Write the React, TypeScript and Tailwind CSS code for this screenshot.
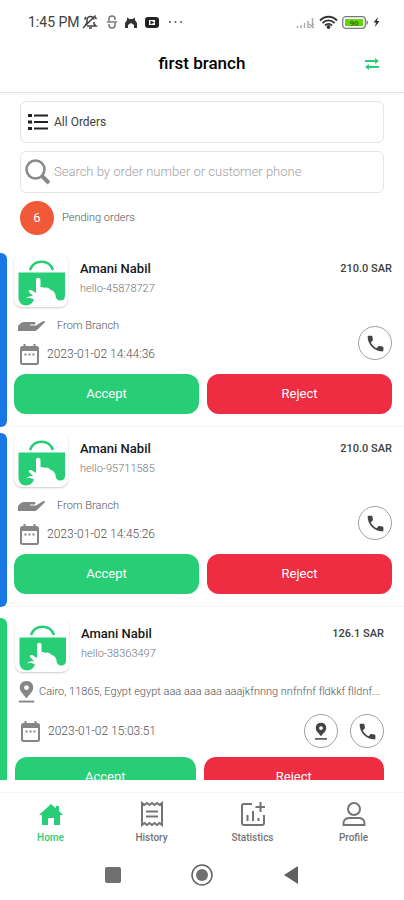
import React, { useState } from 'react';

type Order = {
  id: string;
  name: string;
  ref: string;
  price: string;
  date: string;
  address?: string;
};

const orders: Order[] = [
  { id: '1', name: 'Amani Nabil', ref: 'hello-45878727', price: '210.0 SAR', date: '2023-01-02 14:44:36' },
  { id: '2', name: 'Amani Nabil', ref: 'hello-95711585', price: '210.0 SAR', date: '2023-01-02 14:45:26' },
  {
    id: '3',
    name: 'Amani Nabil',
    ref: 'hello-38363497',
    price: '126.1 SAR',
    date: '2023-01-02 15:03:51',
    address: 'Cairo, 11865, Egypt egypt aaa aaa aaa aaajkfnnng nnfnfnf fldkkf flldnf...',
  },
];

function StatusBar() {
  return (
    <div className="flex h-9 items-center justify-between pl-7 pr-6 pt-2 text-neutral-700">
      <div className="flex items-center">
        <span className="w-[53px] whitespace-nowrap text-sm leading-5">1:45 PM</span>
        {/* muted bell */}
        <svg width="18" height="16" viewBox="0 0 18 16" fill="none" stroke="currentColor" strokeWidth="1.5">
          <path d="M4 11.5 6 9V6.5a3.5 3.5 0 0 1 7-1M13 8v2l2 2H6M8 14h3M2 14 14.5 1.5" />
          <path d="M3.5 5.5 5 3M14 3l1.5 2" />
        </svg>
        <svg className="ml-2" width="10" height="14" viewBox="0 0 10 14" fill="none" stroke="#777" strokeWidth="1.5">
          <path d="M2 6V4a3 3 0 0 1 6 0v1M0 7h10M2 9v1a3 3 0 0 0 6 0V8" />
        </svg>
        <svg className="ml-2" width="12" height="13" viewBox="0 0 12 13" fill="#333">
          <path d="M2 4V1.500L4.500 3h3L10 1.500V4l2 3v5H9V9L6 7 3 9v3H0V7z" />
        </svg>
        <svg className="ml-2" width="14" height="12" viewBox="0 0 14 12">
          <rect width="14" height="11" y="1" rx="3" fill="#222" />
          <path d="M4 4h6v5H4z" fill="#fff" />
          <path d="m5.500 4.500 4 2-4 2z" fill="#222" />
        </svg>
        <svg className="ml-2" width="16" height="4" viewBox="0 0 16 4" fill="#555">
          <circle cx="3" cy="2" r="1" />
          <circle cx="8.500" cy="2" r="1" />
          <circle cx="14" cy="2" r="1" />
        </svg>
      </div>
      <div className="flex items-center gap-1">
        <svg width="19" height="13" viewBox="0 0 19 13" fill="none" stroke="#aaa" strokeWidth="1.5">
          <path d="M1.5 12v-2M5 12V9M8.5 12V7M12 12V5M16.5 12V2M13 8l5 4M18 8l-5 4" />
        </svg>
        <svg width="19" height="14" viewBox="0 0 19 14" fill="none" stroke="#333" strokeWidth="1.8">
          <path d="M1 5.5c5-5 12-5 17 0M3.5 8c3.5-3.5 8.5-3.5 12 0M6 10.500c2-2 5-2 7 0" />
          <circle cx="9.5" cy="12" r="1" fill="#333" />
        </svg>
        <svg width="27" height="13" viewBox="0 0 27 13">
          <rect x=".7" y=".7" width="22.6" height="11.6" rx="3" fill="#fff" stroke="#777" strokeWidth="1.2" />
          <rect x="3" y="3" width="18" height="7" fill="#62d60b" />
          <path d="M24.5 4c2 1 2 4 0 5z" fill="#777" />
          <text x="12" y="9.5" fontSize="8" fontWeight="bold" textAnchor="middle" fill="#36710c">90</text>
        </svg>
        <svg width="7" height="10" viewBox="0 0 6 10" fill="#333">
          <path d="M4.5 0 0 5.500h2.500L1.500 10 6 4H3.500z" />
        </svg>
      </div>
    </div>
  );
}

function Logo() {
  return (
    <div className="size-[54px] shrink-0 rounded-lg bg-white shadow-[0_1px_2px_rgba(0,0,0,0.2)]">
      <svg viewBox="0 0 54 54" aria-hidden="true">
        <path d="M16 17c4-11 19-11 23 0" fill="none" stroke="#28ce75" strokeWidth="2.5" />
        <path
          d="M4.500 19.500H51V43c0 3-2 4.500-4.500 4.500-3 0-5-2-5-5.500-.5-3-3-5-5-5-1-2-4-3-6-2-1-1-3-1-4-1V27c0-3-4.500-3-4.500 0v13l-4-2.500c-2-1-4 0-3 1.500l4 4c-4 0-6 1-7 2.500 3-1 6 0 8 1-1 3-4 6-8 6s-7.500-3-7.500-8z"
          fill="#28ce75"
        />
      </svg>
    </div>
  );
}

function PhoneIcon() {
  return (
    <svg width="21" height="21" viewBox="0 0 24 24" fill="#444" aria-hidden="true">
      <path d="M6.620 10.790c1.440 2.830 3.760 5.140 6.590 6.590l2.200-2.200c.27-.27.67-.36 1.020-.24 1.120.37 2.330.57 3.570.57.55 0 1 .45 1 1V20c0 .55-.45 1-1 1-9.390 0-17-7.610-17-17 0-.55.45-1 1-1h3.500c.55 0 1 .45 1 1 0 1.250.2 2.450.57 3.570.11.35.03.74-.25 1.020l-2.200 2.200z" />
    </svg>
  );
}

function PinIcon({ size, color }: { size: number; color: string }) {
  return (
    <svg width={size} height={size} viewBox="0 0 20 24" fill={color} aria-hidden="true" className="shrink-0">
      <path fillRule="evenodd" d="M10 1C5.500 1 3 4 3 8c0 4 4 7 7 11 3-4 7-7 7-11 0-4-2.500-7-7-7zm0 4.500a2.500 2.500 0 1 1 0 5 2.500 2.500 0 0 1 0-5z" />
      <path d="M2 21.500h16v2H2z" />
    </svg>
  );
}

function HandIcon() {
  return (
    <svg width="27" height="12" viewBox="0 0 27 12" fill="#858585" aria-hidden="true">
      <path d="M0 6c3-4 5-4 8-4h8c2 0 2 2.500 0 2.500h-4v1h6l6.500-4c1.500-1 3 0 2 1.200L19.500 9.500c-1 1-2 1.500-4 1.500H0z" />
    </svg>
  );
}

function CalendarIcon() {
  return (
    <svg width="19" height="21" viewBox="0 0 19 21" fill="none" stroke="#858585" aria-hidden="true">
      <rect x="1" y="3" width="17" height="17" rx="1.5" strokeWidth="2" />
      <path d="M1 5h17" strokeWidth="4" />
      <path d="M4.5 0v4M14.5 0v4" strokeWidth="2" />
      <path d="M4.5 10.5h2M8.5 10.5h2M12.5 10.5h2" strokeWidth="2" />
    </svg>
  );
}

const roundButton = 'flex size-[34px] items-center justify-center rounded-full border border-neutral-400 bg-white';

function OrderCard({ order }: { order: Order }) {
  const delivery = Boolean(order.address);
  return (
    <article className={delivery ? 'flex pt-[5px]' : 'flex'}>
      <div className={delivery ? 'w-[7px] shrink-0 rounded-tr-md bg-[#28ce75]' : 'w-[7px] shrink-0 rounded-r-md bg-[#1a78e6]'} />
      <div className={delivery ? 'min-w-0 flex-1 pl-2 pr-5 pb-3' : 'min-w-0 flex-1 border-b border-neutral-100 pl-[7px] pr-3 pb-3'}>
        <div className="flex">
          <Logo />
          <div className="min-w-0 flex-1 pl-3 pt-[6px]">
            <div className="flex items-center justify-between leading-5">
              <h2 className="text-[13px] font-medium text-neutral-900">{order.name}</h2>
              <span className="text-[11px] font-medium text-neutral-700">{order.price}</span>
            </div>
            <p className="text-[11px] leading-5 font-light text-neutral-500">{order.ref}</p>
          </div>
        </div>
        {delivery ? (
          <div className="-mr-4 mt-2 flex items-center gap-px">
            <PinIcon size={23} color="#858585" />
            <p className="min-w-0 flex-1 truncate text-[11px] leading-5 font-light text-neutral-600">{order.address}</p>
          </div>
        ) : null}
        <div className={delivery ? 'mt-[10px] mb-2 flex items-center justify-between' : 'mb-[2px] flex items-end justify-between'}>
          <div>
            {!delivery && (
              <p className="mt-[9px] flex items-center gap-3 pl-1 text-[11px] leading-5 font-light text-neutral-600">
                <HandIcon />
                From Branch
              </p>
            )}
            <p className="flex h-9 items-center gap-2 pl-[6px] text-xs font-light text-neutral-600">
              <CalendarIcon />
              {order.date}
            </p>
          </div>
          <div className={delivery ? 'flex gap-3' : 'mb-3 flex gap-3'}>
            {delivery && (
              <button className={roundButton} aria-label="Show on map">
                <PinIcon size={18} color="#444" />
              </button>
            )}
            <button className={roundButton} aria-label="Call customer">
              <PhoneIcon />
            </button>
          </div>
        </div>
        <div className="flex gap-2 text-[13px] text-white">
          <button className="h-10 flex-1 rounded-xl bg-[#28ce75]">Accept</button>
          <button className="h-10 flex-1 rounded-xl bg-[#ef2d42]">Reject</button>
        </div>
      </div>
    </article>
  );
}

function BottomNav() {
  const icon = { width: 24, height: 26, viewBox: '0 0 24 26', fill: 'none', stroke: 'currentColor', strokeWidth: 2 };
  const items = [
    {
      label: 'Home',
      icon: <svg {...icon}><path d="M12 3 0 14h3v10h6v-7h6v7h6V14h3l-4-4V5h-3v2.500z" fill="currentColor" stroke="none" /></svg>,
    },
    {
      label: 'History',
      icon: (
        <svg {...icon}>
          <path d="M2 2v22l2.500-2L7 24l2.500-2 2.500 2 2.500-2 2.500 2 2.500-2 2.500 2V2l-2.500 2L17 2l-2.500 2L12 2 9.500 4 7 2 4.500 4zM6 10.500h12M6 15.500h12" />
        </svg>
      ),
    },
    {
      label: 'Statistics',
      icon: <svg {...icon}><path d="M11 3H3a2 2 0 0 0-2 2v17a2 2 0 0 0 2 2h18a2 2 0 0 0 2-2v-8M6.500 14v6M12 10v10M17.500 17v3M19.500 1v10M14.500 6H24" /></svg>,
    },
    {
      label: 'Profile',
      icon: <svg {...icon}><circle cx="12" cy="8" r="6" /><path d="M7 17h10c4 0 6 3 5.500 7h-21C1 20 3 17 7 17z" /></svg>,
    },
  ];
  return (
    <nav className="grid h-[58px] shrink-0 grid-cols-4 border-t border-neutral-100 bg-white pt-2">
      {items.map((item, i) => (
        <a key={item.label} href="#" className={i === 0 ? 'flex flex-col items-center gap-px text-[#28ce75]' : 'flex flex-col items-center gap-px text-neutral-500'}>
          {item.icon}
          <span className="text-[10px] leading-5 font-medium">{item.label}</span>
        </a>
      ))}
    </nav>
  );
}

export default function App() {
  const [query, setQuery] = useState('');

  return (
    <div className="flex h-screen flex-col bg-white font-[Roboto,sans-serif]">
      <StatusBar />
      <header className="flex h-[57px] shrink-0 items-center border-b border-neutral-200 px-6 shadow-xs">
        <h1 className="flex-1 pl-4 text-center text-[17px] font-medium text-black">first branch</h1>
        <button aria-label="Switch branch">
          <svg width="16" height="12" viewBox="0 0 16 12" fill="#28ce75">
            <path d="M1 2h10V0l4 3-4 3V4H1zM15 8H5V6L1 9l4 3v-2h10z" />
          </svg>
        </button>
      </header>

      <main className="flex min-h-0 flex-1 flex-col">
        <div className="flex flex-col gap-2 px-5 pt-2">
          <button className="flex h-[42px] items-center gap-[6px] rounded-md border border-neutral-200 px-[7px] text-xs text-neutral-700">
            <svg width="20" height="18" viewBox="0 0 20 18" fill="none" stroke="#222" strokeWidth="2">
              <path d="M6 2.5h14M6 9h14M6 15.5h14" />
              <path d="M0 2.5h4M0 9h4M0 15.5h4" strokeWidth="3" />
            </svg>
            All Orders
          </button>
          <label className="flex h-[42px] items-center gap-1 rounded-md border border-neutral-200 px-1">
            <svg width="25" height="26" viewBox="0 0 25 26" fill="none" stroke="#888" aria-hidden="true">
              <circle cx="10.5" cy="10.5" r="9" strokeWidth="2.5" />
              <path d="m17 17 7 7" strokeWidth="4" />
            </svg>
            <input
              type="text"
              className="min-w-0 flex-1 text-[13px] font-light outline-none placeholder:text-neutral-400"
              value={query}
              placeholder="Search by order number or customer phone"
              onChange={e => setQuery(e.target.value)}
            />
          </label>
          <div className="flex items-center gap-2 text-[11px] font-light text-neutral-600">
            <span className="flex size-[34px] items-center justify-center rounded-full bg-[#f15a38] text-[13px] font-normal text-white">6</span>
            Pending orders
          </div>
        </div>

        <section className="mt-[18px] flex min-h-0 flex-1 flex-col gap-[6px] overflow-hidden">
          {orders.map(order => (
            <OrderCard key={order.id} order={order} />
          ))}
        </section>
      </main>

      <div className="h-3 shrink-0" />
      <BottomNav />
      {/* Android system buttons */}
      <div className="flex h-[50px] shrink-0 items-center justify-center gap-[70px]">
        <svg width="16" height="16"><rect width="16" height="16" rx="2" fill="#707070" /></svg>
        <svg width="22" height="22" viewBox="0 0 22 22">
          <circle cx="11" cy="11" r="10" fill="none" stroke="#606060" strokeWidth="1.5" />
          <circle cx="11" cy="11" r="6" fill="#707070" />
        </svg>
        <svg width="16" height="18" viewBox="0 0 16 18"><path d="M15 0v18L1 9z" fill="#606060" /></svg>
      </div>
    </div>
  );
}
